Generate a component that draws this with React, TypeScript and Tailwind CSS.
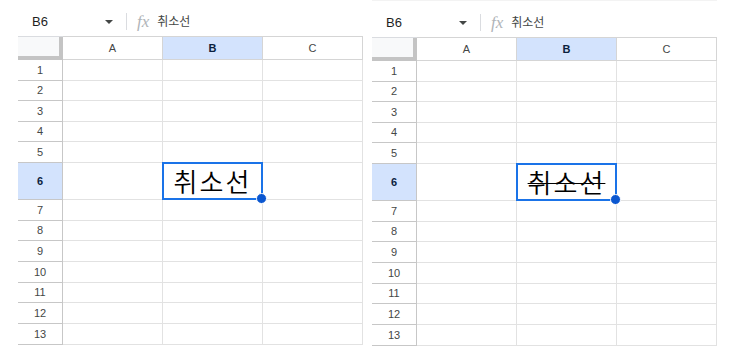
import React from "react";

const rows = [1, 2, 3, 4, 5, 6, 7, 8, 9, 10, 11, 12, 13];
const cols = ["A", "B", "C"];

function rowHeight(r: number) {
  if (r === 6) return "h-[37px]";
  if (r < 6) return "h-[20.6px]";
  return "h-[20.7px]";
}

function Toolbar() {
  return (
    <div className="flex h-[36px] items-center pt-[7px] text-[#1f1f1f]">
      <div className="flex w-[86px] items-center pl-[14px] text-[13px]">B6</div>
      <svg width="10" height="6" viewBox="0 0 10 6" className="mt-[1px]">
        <path d="M1 1 L5 5 L9 1 Z" fill="#444746" />
      </svg>
      <div className="ml-[12px] h-[17px] w-px bg-[#dadce0]" />
      <span
        className="ml-[10px] text-[17px] italic leading-none text-[#b0b4b8]"
        style={{ fontFamily: '"Liberation Serif", serif' }}
      >
        fx
      </span>
      <span className="ml-[8px] text-[12px] text-[#444746]">취소선</span>
    </div>
  );
}

function Sheet({ strike }: { strike: boolean }) {
  return (
    <div className="w-[345px]">
      <Toolbar />
      <div className="grid grid-cols-[45px_100px_100px_100px]">
        {/* header row */}
        <div className="h-[24px] border-t border-[#dadce0] bg-[#f8f9fa] shadow-[inset_-4px_-4px_0_#c4c4c4]" />
        {cols.map((c) => (
          <div
            key={c}
            className={`flex h-[24px] items-center justify-center border-t border-r border-b border-[#d5d5d5] text-[11px] ${
              c === "B" ? "bg-[#d3e3fd] font-bold text-[#0b1f3f]" : "bg-white text-[#444746]"
            }`}
          >
            {c}
          </div>
        ))}
        {rows.map((r) => (
          <React.Fragment key={r}>
            <div
              className={`flex ${rowHeight(r)} items-center justify-center border-r border-b border-[#c7c7c7] text-[11px] ${
                r === 6 ? "bg-[#d3e3fd] font-bold text-[#0b1f3f]" : "bg-white text-[#444746]"
              }`}
            >
              {r}
            </div>
            {cols.map((c) => (
              <div
                key={c}
                className={`relative ${rowHeight(r)} border-r border-b border-[#e2e2e2] bg-white`}
              >
                {r === 6 && c === "B" && (
                  <div className="absolute -top-px -left-px -right-px -bottom-px z-10 flex items-center justify-center border-2 border-[#1a73e8]">
                    <span
                      className={`text-[26px] font-[350] leading-none tracking-[2px] text-black ${strike ? "line-through decoration-1" : ""}`}
                      style={{ fontFamily: '"Noto Sans CJK KR", sans-serif' }}
                    >
                      취소선
                    </span>
                    <div className="absolute -right-[6px] -bottom-[6px] h-[11px] w-[11px] rounded-full border border-white bg-[#0b57d0]" />
                  </div>
                )}
              </div>
            ))}
          </React.Fragment>
        ))}
      </div>
    </div>
  );
}

export default function App() {
  return (
    <div
      className="flex h-[355px] w-[738px] gap-[9px] bg-white pl-[18px]"
      style={{ fontFamily: 'Arial, "Liberation Sans", "Noto Sans CJK KR", sans-serif' }}
    >
      <Sheet strike={false} />
      <div className="border-t border-[#f3f3f3]">
        <Sheet strike={true} />
      </div>
    </div>
  );
}
